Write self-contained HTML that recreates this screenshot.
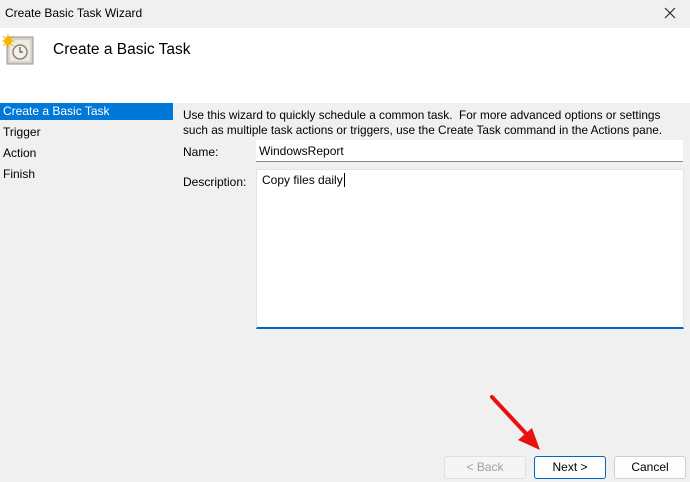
<!DOCTYPE html>
<html><head><style>
*{margin:0;padding:0;box-sizing:border-box}
body{width:690px;height:482px;background:#f0f0f0;font-family:"Liberation Sans",sans-serif;font-size:12px;color:#000;position:relative;overflow:hidden}
.a{position:absolute;white-space:nowrap}
</style></head><body>
<div class="a" style="left:0;top:0;width:690px;height:28px;background:#f0f0f0"></div>
<div class="a" style="left:5px;top:6px;font-size:12px">Create Basic Task Wizard</div>
<svg class="a" style="left:664px;top:7px" width="12" height="12"><path d="M1 1L11 11M11 1L1 11" stroke="#222" stroke-width="1.1"/></svg>
<div class="a" style="left:0;top:28px;width:690px;height:75px;background:#fff"></div>
<svg class="a" style="left:2px;top:34px" width="32" height="32">
<rect x="5" y="3" width="26" height="27" fill="#d8d4cc" stroke="#9a948a"/>
<rect x="8" y="6" width="20" height="21" fill="#eeebe5"/>
<circle cx="18" cy="18" r="7" fill="#f4f1ea" stroke="#8a8578" stroke-width="1.5"/>
<path d="M18 13V18H21" stroke="#555" stroke-width="1.2" fill="none"/>
<circle cx="6" cy="7" r="4" fill="#f7b500"/>
<path d="M6 0V14M-1 7H13M1 2L11 12M11 2L1 12" stroke="#f7b500" stroke-width="1"/>
</svg>
<div class="a" style="left:53px;top:41px;font-size:15.5px">Create a Basic Task</div>
<div class="a" style="left:0;top:103px;width:173px;height:17px;background:#0078d7"></div>
<div class="a" style="left:3px;top:104px;color:#fff">Create a Basic Task</div>
<div class="a" style="left:3px;top:125px">Trigger</div>
<div class="a" style="left:3px;top:146px">Action</div>
<div class="a" style="left:3px;top:167px">Finish</div>
<div class="a" style="left:183px;top:108px;font-size:11.8px;line-height:15px">Use this wizard to quickly schedule a common task.&nbsp; For more advanced options or settings<br>such as multiple task actions or triggers, use the Create Task command in the Actions pane.</div>
<div class="a" style="left:183px;top:145px">Name:</div>
<div class="a" style="left:256px;top:140px;width:427px;height:22px;background:#fff;border-bottom:1px solid #8a8a8a"></div>
<div class="a" style="left:259px;top:144px">WindowsReport</div>
<div class="a" style="left:183px;top:175px">Description:</div>
<div class="a" style="left:256px;top:169px;width:428px;height:160px;background:#fff;border:1px solid #e3e3e3;border-bottom:2px solid #0067c0"></div>
<div class="a" style="left:262px;top:173px">Copy files daily<span style="border-left:1px solid #000;margin-left:1px"></span></div>
<div class="a" style="left:444px;top:456px;width:82px;height:23px;border:1px solid #e0e0e0;border-radius:3px;background:#f5f5f5;color:#a0a0a0;text-align:center;line-height:21px">&lt; Back</div>
<div class="a" style="left:534px;top:456px;width:72px;height:23px;border:1px solid #0067c0;border-radius:3px;background:#fdfdfd;text-align:center;line-height:21px">Next &gt;</div>
<div class="a" style="left:614px;top:456px;width:72px;height:23px;border:1px solid #d0d0d0;border-radius:3px;background:#fdfdfd;text-align:center;line-height:21px">Cancel</div>
<svg class="a" style="left:480px;top:390px" width="70" height="70">
<path d="M12 7L52 50" stroke="#e81010" stroke-width="4" stroke-linecap="round"/>
<path d="M60 60L38 50L52 38Z" fill="#e81010"/>
</svg>
</body></html>
